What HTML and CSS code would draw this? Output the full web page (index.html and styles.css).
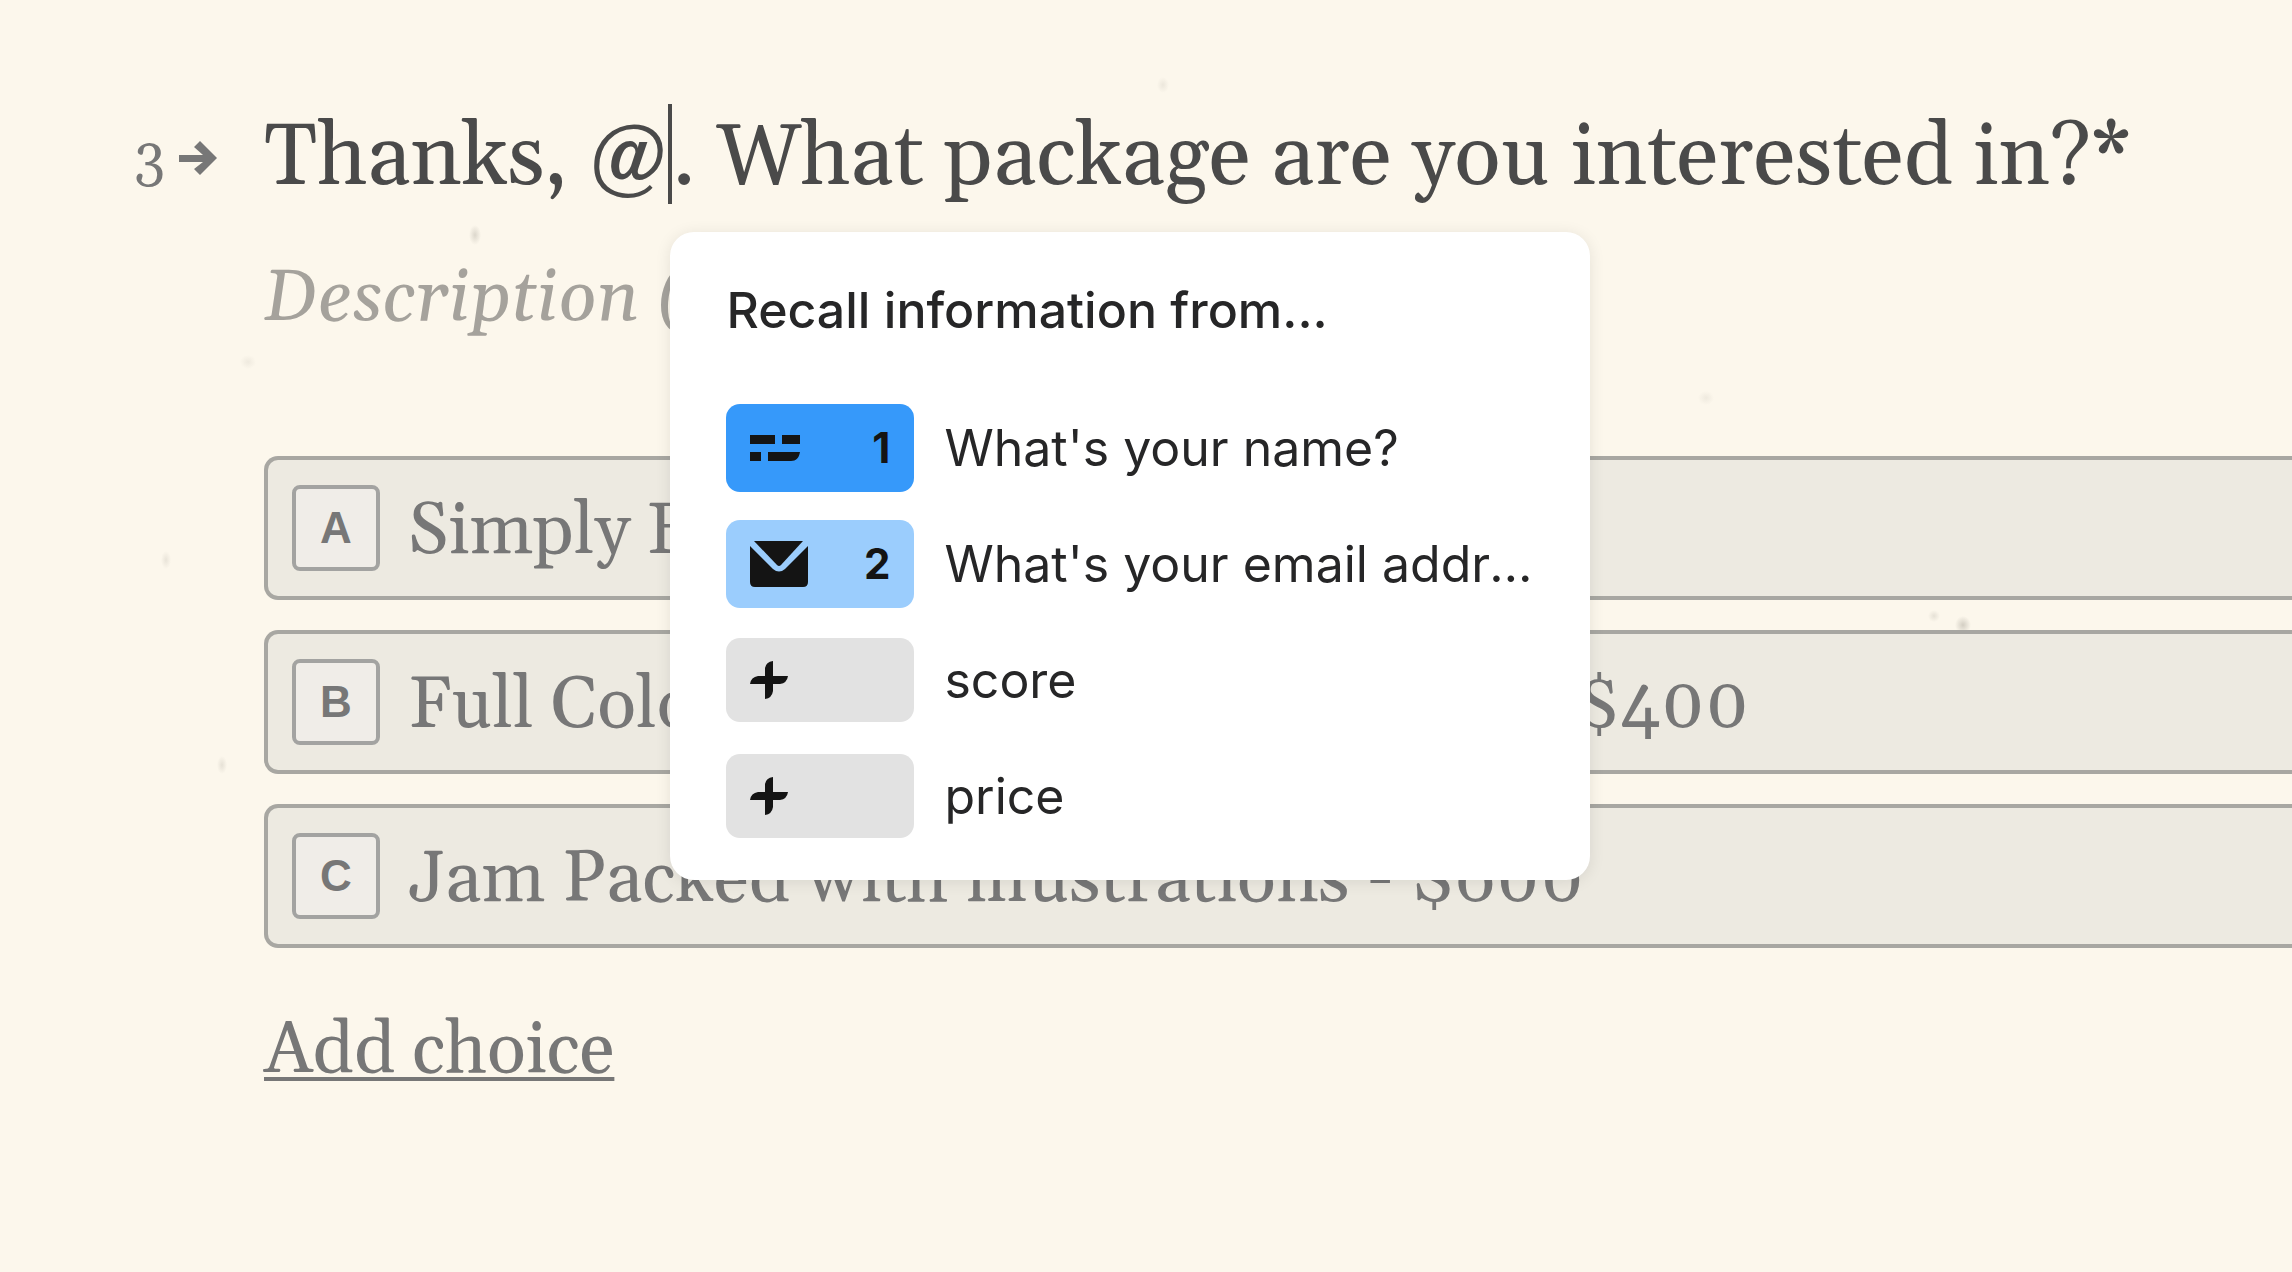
FILE: index.html
```html
<!DOCTYPE html>
<html lang="en">
<head>
<meta charset="UTF-8">
<meta name="viewport" content="width=device-width, initial-scale=1.0">
<title>Form editor</title>
<link rel="stylesheet" href="styles.css">
</head>
<body>
<main class="question">
  <div class="number">
    3
    <svg class="arrow" viewBox="0 0 38 36" aria-hidden="true"><path d="M0 14h24L15 6l6-6 17 17-17 17-6-6 9-7H0z"/></svg>
  </div>

  <div class="content">
    <h1 class="title">Thanks, @<span class="caret"><span class="recall">
      <span class="recall-title">Recall information from...</span>
      <button class="recall-item">
        <span class="tag short-text">
          <svg width="50" height="26" viewBox="0 0 50 26" aria-hidden="true"><path d="M0 0h25v9H0zM32 0h18v9H32zM0 17h11v9H0zM18 17h32c-1 6-4 9-9 9H18z"/></svg>
          <b>1</b>
        </span>
        <span class="label">What's your name?</span>
      </button>
      <button class="recall-item">
        <span class="tag email">
          <svg width="58" height="46" viewBox="0 0 58 46" aria-hidden="true"><path d="M4 0h49L31 24q-2 2-4 0z"/><path d="M0 5l23 23q6 5 12 0L58 5v36q0 5-5 5H5q-5 0-5-5z"/></svg>
          <b>2</b>
        </span>
        <span class="label">What's your email address?</span>
      </button>
      <button class="recall-item">
        <span class="tag variable">
          <svg width="38" height="38" viewBox="0 0 38 38" aria-hidden="true"><path d="M15 15V7q1-6 8-7v15h15q-1 7-8 8h-7v7q-1 7-8 8V23H0q1-7 8-8z"/></svg>
        </span>
        <span class="label">score</span>
      </button>
      <button class="recall-item">
        <span class="tag variable">
          <svg width="38" height="38" viewBox="0 0 38 38" aria-hidden="true"><path d="M15 15V7q1-6 8-7v15h15q-1 7-8 8h-7v7q-1 7-8 8V23H0q1-7 8-8z"/></svg>
        </span>
        <span class="label">price</span>
      </button>
    </span></span>. What package are you interested in?*</h1>
    <p class="description">Description (optional)</p>

    <div class="choices">
      <button class="choice"><span class="key">A</span><span class="text">Simply Black &amp; White - $200</span></button>
      <button class="choice"><span class="key">B</span><span class="text">Full Color with Partial illustrations - $400</span></button>
      <button class="choice"><span class="key">C</span><span class="text">Jam Packed with illustrations - $600</span></button>
    </div>
    <a class="add" href="#">Add choice</a>
  </div>
</main>
</body>
</html>
```
FILE: styles.css
```css
*{box-sizing:border-box;margin:0;padding:0}
/* paper colour with a few faint specks */
body{min-height:100vh;background:
  radial-gradient(6px 10px at 475px 235px,#dcd7cc,transparent),
  radial-gradient(8px 9px at 1963px 625px,#d3cec3,transparent),
  radial-gradient(6px 6px at 1934px 616px,#e6e1d6,transparent),
  radial-gradient(5px 9px at 166px 560px,#e9e4d9,transparent),
  radial-gradient(5px 9px at 222px 765px,#e6e1d6,transparent),
  radial-gradient(6px 8px at 1163px 85px,#ece7dc,transparent),
  radial-gradient(8px 7px at 248px 362px,#efeadf,transparent),
  radial-gradient(8px 7px at 1706px 398px,#efeadf,transparent),
  #fcf7ec;
  font-family:Georgia,Gelasio,"Liberation Serif",serif;color:#4a4a4a;overflow-x:hidden}
button{font:inherit;color:inherit;text-align:left;cursor:pointer}
.question{display:flex;padding-top:104px}
.number{flex:none;width:264px;height:110px;padding-left:134px;display:flex;align-items:center;gap:14px;font-size:56px;color:#777}
.arrow{width:38px;height:36px;fill:#777}
.content{flex:1;min-width:0}
.title{font-size:86px;line-height:110px;font-weight:400;white-space:nowrap}
.caret{position:relative;display:inline-block;width:4px;height:100px;background:#4a4a4a;vertical-align:top}
.description{margin-top:36px;font-size:72px;line-height:98px;font-style:italic;color:#a5a29c}

.recall{position:absolute;top:128px;left:2px;z-index:2;width:920px;padding:48px 56px 40px;background:#fff;border-radius:24px;box-shadow:0 2px 16px #00000018;font:50px/60px Inter,sans-serif;color:#262627}
.recall-title{display:block;margin-bottom:64px;font-weight:500}
.recall-item{display:flex;align-items:center;gap:30px;width:100%;min-height:88px;margin-bottom:28px;background:none;border:none}
.recall-item:last-child{margin-bottom:0}
.tag{flex:none;width:188px;height:88px;padding:0 24px;display:flex;align-items:center;justify-content:space-between;border-radius:14px;color:#141414;font-size:42px}
.tag svg{fill:#141414}
.short-text{background:#3699fa}
.email{background:#9bcdfd}
.variable{height:84px;background:#e2e2e2}
.label{overflow:hidden;text-overflow:ellipsis;white-space:nowrap}

.choices{display:flex;flex-direction:column;gap:30px;margin-top:108px}
.choice{display:flex;align-items:center;gap:28px;height:144px;padding-left:24px;background:#edeae1;border:4px solid #a8a7a2;border-right:none;border-radius:14px 0 0 14px;font-size:72px;color:#777;white-space:nowrap}
.key{width:88px;height:86px;display:flex;align-items:center;justify-content:center;background:#f0ede8;border:4px solid #a3a3a1;border-radius:8px;font:bold 44px "Liberation Sans",sans-serif}
.text{padding-top:8px}
.add{display:inline-block;margin-top:54px;font-size:72px;line-height:98px;color:#777;text-underline-offset:5px;text-decoration-thickness:4px;text-decoration-skip-ink:none}
```
